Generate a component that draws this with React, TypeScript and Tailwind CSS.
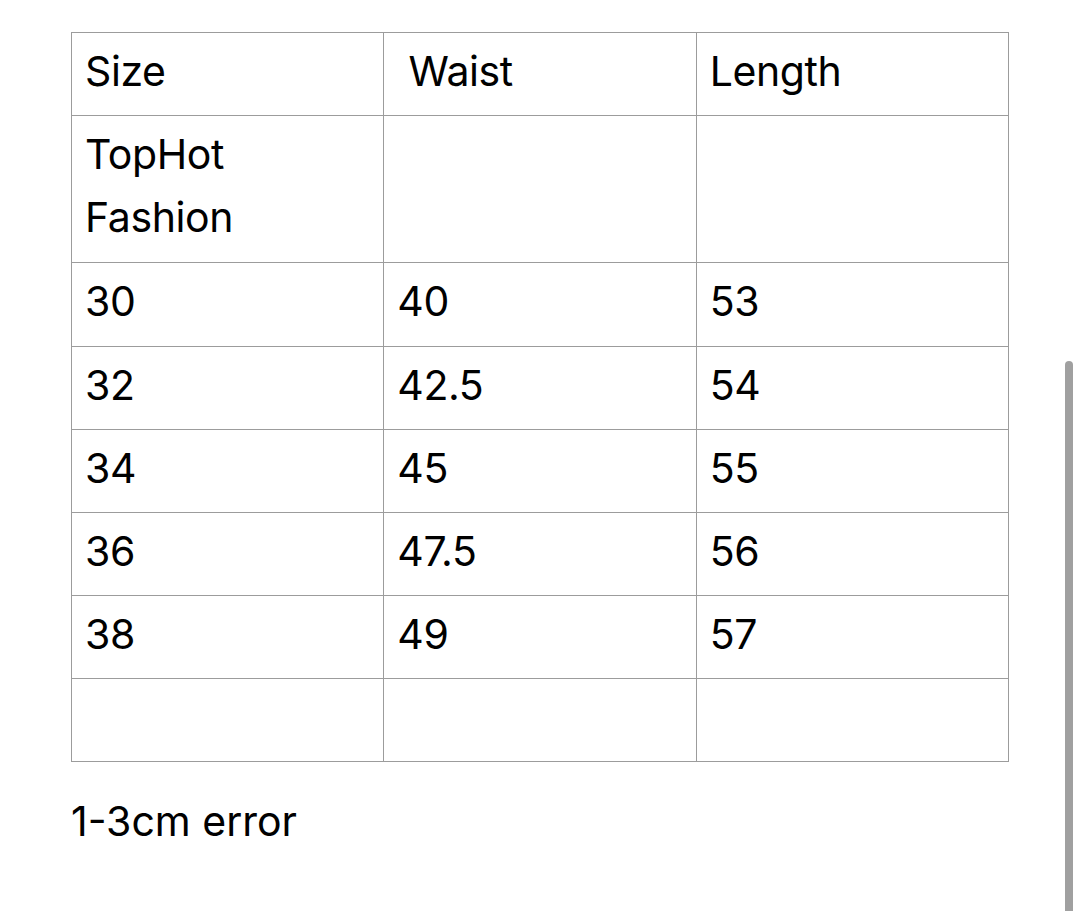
import React from "react";

const rows: string[][] = [
  ["30", "40", "53"],
  ["32", "42.5", "54"],
  ["34", "45", "55"],
  ["36", "47.5", "56"],
  ["38", "49", "57"],
  ["\u00a0", "", ""],
];

const cell = "border border-[#9c9c9c] px-[13px] pt-[7px] pb-[13px] align-top font-normal text-left";

const App: React.FC = () => {
  return (
    <div className="relative min-h-[911px] w-[1080px] overflow-hidden bg-white font-['Inter','Liberation_Sans',sans-serif] text-[41px] leading-[62px] tracking-[-0.4px] text-black">
      <div className="pl-[71px] pt-[32px]">
        <table className="w-[938px] table-fixed border-collapse">
          <thead>
            <tr>
              <th className={cell}>Size</th>
              <th className={cell}>&nbsp;Waist</th>
              <th className={cell}>Length</th>
            </tr>
          </thead>
          <tbody>
            <tr>
              <td className={`${cell} leading-[63px]`}>
                TopHot
                <br />
                Fashion
              </td>
              <td className={cell}></td>
              <td className={cell}></td>
            </tr>
            {rows.map((r, i) => (
              <tr key={i}>
                {r.map((v, j) => (
                  <td key={j} className={i === 0 ? `${cell} pb-[14px]` : cell}>
                    {v}
                  </td>
                ))}
              </tr>
            ))}
          </tbody>
        </table>
        <p className="mt-[28px] tracking-[0px]">1-3cm error</p>
      </div>
      {/* scroll indicator */}
      <div className="absolute top-[361px] right-[7px] h-[560px] w-[8px] rounded-full bg-[#a0a0a0]" />
    </div>
  );
};

export default App;
